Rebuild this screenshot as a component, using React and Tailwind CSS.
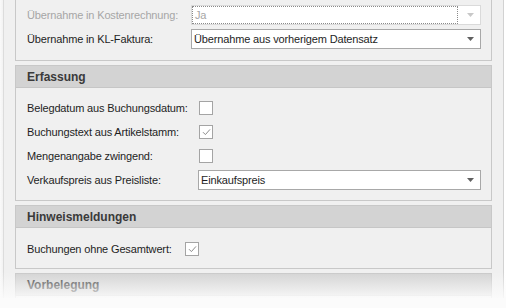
import React from 'react';

const font = { fontFamily: '"Liberation Sans", Arial, sans-serif' };

const Arrow = ({ disabled }) => (
    <svg width="7" height="4" viewBox="0 0 7 4" className="shrink-0">
        <path d="M0 0h7L3.5 4z" fill={disabled ? '#c8c8c8' : '#606060'} />
    </svg>
);

const Combo = ({ value, disabled }) => (
    <div
        className={`flex-1 h-[20px] flex items-center bg-white border ${
            disabled ? 'border-[#dadada]' : 'border-[#a8a8a8]'
        } pr-[6px]`}
    >
        <div
            className={`flex-1 h-full flex items-center pl-[2px] ${
                disabled ? 'border border-dotted border-[#8a8a8a] text-[#a6a6a6]' : 'text-[#1e1e1e]'
            }`}
        >
            {value}
        </div>
        <div className="w-[16px] flex justify-end">
            <Arrow disabled={disabled} />
        </div>
    </div>
);

const Check = ({ checked }) => (
    <div className="w-[14px] h-[14px] bg-white border border-[#a4a4a4] flex items-center justify-center">
        {checked && (
            <svg width="9" height="8" viewBox="0 0 9 8">
                <path d="M1 4.2L3.4 6.6 8 1.4" fill="none" stroke="#8c8c8c" strokeWidth="1" />
            </svg>
        )}
    </div>
);

const Row = ({ label, labelW, children, muted }) => (
    <div className="h-[20px] shrink-0 flex items-center">
        <div className={`shrink-0 ${muted ? 'text-[#a6a6a6]' : 'text-[#1e1e1e]'}`} style={{ width: labelW }}>
            {label}
        </div>
        {children}
    </div>
);

const Header = ({ title }) => (
    <div className="h-[22px] flex items-center pl-[11px] bg-[#d3d3d3] border-b border-[#c6c6c6] text-[12px] font-bold text-[#3a3a3a] tracking-normal">
        {title}
    </div>
);

export default function App() {
    return (
        <div className="w-[506px] h-[308px] relative overflow-hidden flex bg-[#f0f0f0] text-[11px] tracking-[-0.15px]" style={font}>
            <div className="w-[3px] bg-gradient-to-r from-[#fafafa] to-[#f2f2f2]" />
            <div className="w-px bg-[#dcdcdc]" />

            <div className="w-[499px] pl-[11px] pr-[11px] flex flex-col gap-[4px]">
                {/* Fortsetzung des vorigen Abschnitts */}
                <div className="shrink-0 h-[61px] border-x border-b border-[#c8c8c8] bg-[#f0f0f0] pl-[11px] pr-[10px] pt-[5px] flex flex-col gap-[4px]">
                    <Row label="Übernahme in Kostenrechnung:" labelW={164} muted>
                        <Combo value="Ja" disabled />
                    </Row>
                    <Row label="Übernahme in KL-Faktura:" labelW={164}>
                        <Combo value="Übernahme aus vorherigem Datensatz" />
                    </Row>
                </div>

                <div className="shrink-0 border border-[#c8c8c8] bg-[#f0f0f0]">
                    <Header title="Erfassung" />
                    <div className="pl-[11px] pr-[10px] pt-[10px] pb-[10px] flex flex-col gap-[4px]">
                        <Row label="Belegdatum aus Buchungsdatum:" labelW={172}>
                            <Check />
                        </Row>
                        <Row label="Buchungstext aus Artikelstamm:" labelW={172}>
                            <Check checked />
                        </Row>
                        <Row label="Mengenangabe zwingend:" labelW={172}>
                            <Check />
                        </Row>
                        <Row label="Verkaufspreis aus Preisliste:" labelW={171}>
                            <Combo value="Einkaufspreis" />
                        </Row>
                    </div>
                </div>

                <div className="shrink-0 border border-[#c8c8c8] bg-[#f0f0f0]">
                    <Header title="Hinweismeldungen" />
                    <div className="pl-[11px] pr-[10px] pt-[11px] pb-[9px]">
                        <Row label="Buchungen ohne Gesamtwert:" labelW={158}>
                            <Check checked />
                        </Row>
                    </div>
                </div>

                <div className="shrink-0 border border-[#c8c8c8] bg-[#f0f0f0]">
                    <Header title="Vorbelegung" />
                    <div className="h-[40px]" />
                </div>
            </div>

            <div className="w-px bg-[#d2d2d2]" />
            <div className="flex-1 bg-white" />

            {/* Ausblendung am unteren Rand */}
            <div className="absolute left-0 right-0 top-[272px] h-[26px] bg-gradient-to-b from-[#ffffff00] to-[#fbfbfbe6]" />
            <div className="absolute left-0 right-0 top-[298px] bottom-0 bg-[#fbfbfb]" />
        </div>
    );
}
